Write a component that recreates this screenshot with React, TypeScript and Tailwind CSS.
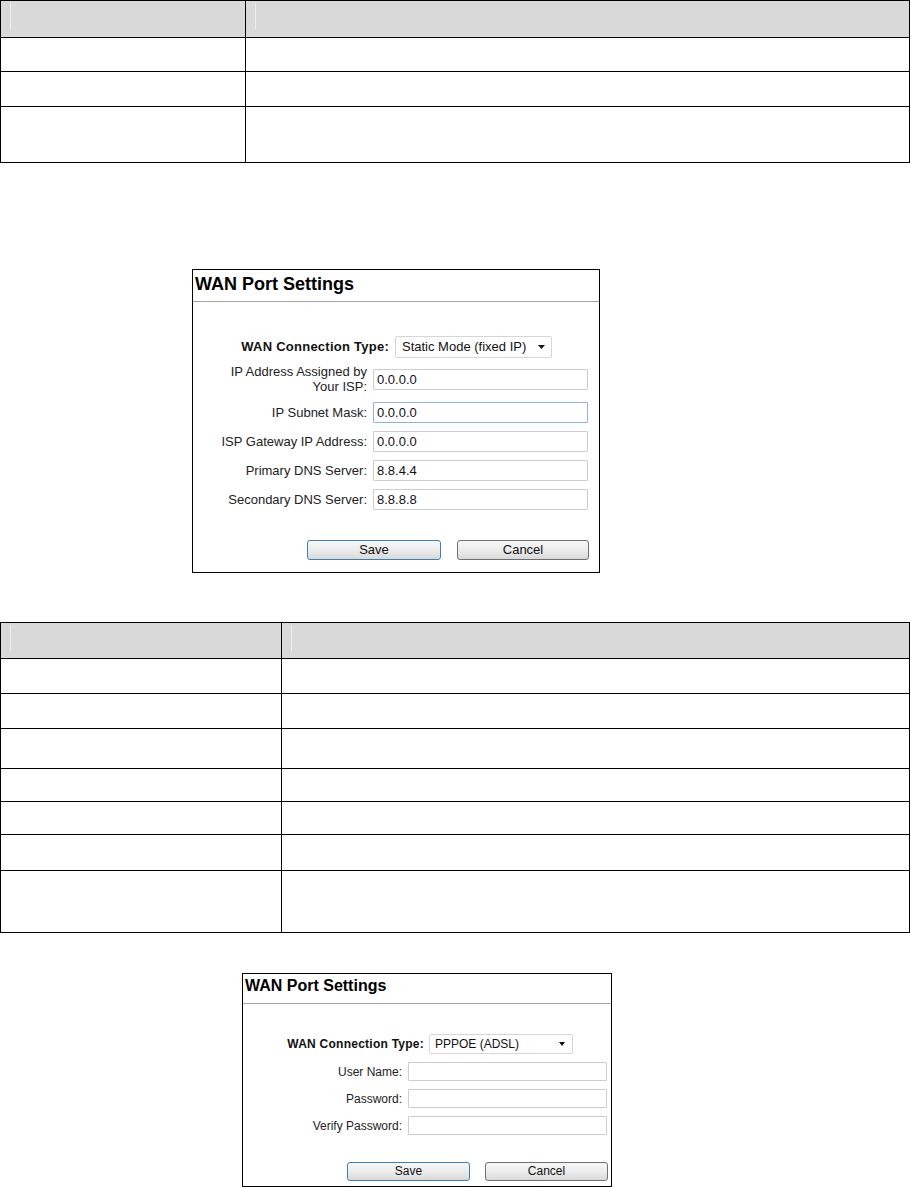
import React from 'react';

// Manual page: two blank parameter tables and two "WAN Port Settings" dialogs.

const FONT = "font-['Liberation_Sans',Arial,Helvetica,sans-serif]";

type TableProps = {
  leftWidth: string;
  header: string;
  rows: string[];
  lastRow: string;
};

function BlankTable({ leftWidth, header, rows, lastRow }: TableProps) {
  return (
    <div className="w-[910px] border border-black">
      <div className={`flex ${header} border-b border-black bg-[#d9d9d9]`}>
        <div className={`${leftWidth} shrink-0 border-r border-black`}>
          <div className="ml-[9px] mt-[2px] h-[26px] w-[1px] bg-[#eeeeee]" />
        </div>
        <div className="flex-1">
          <div className="ml-[9px] mt-[2px] h-[26px] w-[1px] bg-[#eeeeee]" />
        </div>
      </div>
      {rows.map((h, i) => (
        <div key={i} className={`flex ${h} border-b border-black`}>
          <div className={`${leftWidth} shrink-0 border-r border-black`} />
          <div className="flex-1" />
        </div>
      ))}
      <div className={`flex ${lastRow}`}>
        <div className={`${leftWidth} shrink-0 border-r border-black`} />
        <div className="flex-1" />
      </div>
    </div>
  );
}

function Caret({ w }: { w: number }) {
  return (
    <svg width={w} height="4" viewBox={`0 0 ${w} 4`} aria-hidden="true">
      <polygon points={`0,0 ${w},0 ${w / 2},4`} fill="#111" />
    </svg>
  );
}

function Field({
  value,
  focused,
  className,
}: {
  value: string;
  focused?: boolean;
  className: string;
}) {
  return (
    <input
      readOnly
      value={value}
      className={`${className} rounded-[1px] border bg-white pl-[3px] text-[#111] outline-none ${
        focused ? 'border-[#8fb4da]' : 'border-[#cdcdcd]'
      }`}
    />
  );
}

function Btn({ label, primary, className }: { label: string; primary?: boolean; className: string }) {
  return (
    <button
      type="button"
      className={`${className} rounded-[3px] border bg-gradient-to-b from-[#f7f7f7] via-[#ececec] to-[#d9d9d9] pb-[1px] leading-none text-[#111] ${
        primary ? 'border-[#3c7fb1]' : 'border-[#707070]'
      }`}
    >
      {label}
    </button>
  );
}

function StaticPanel() {
  const rows = [
    { label: 'IP Subnet Mask:', value: '0.0.0.0', focused: true },
    { label: 'ISP Gateway IP Address:', value: '0.0.0.0' },
    { label: 'Primary DNS Server:', value: '8.8.4.4' },
    { label: 'Secondary DNS Server:', value: '8.8.8.8' },
  ];
  return (
    <div className="ml-[192px] mt-[106px] h-[304px] w-[408px] border border-black bg-white text-[13px] text-[#222]">
      <div className="h-[32px] border-b border-[#a3a3a3] pl-[2px] pt-[4px]">
        <h2 className="text-[18px] font-bold leading-[20px] text-black">WAN Port Settings</h2>
      </div>

      <div className="mt-[34px] flex h-[22px] items-center">
        <div className="w-[196px] text-right font-bold tracking-[0.25px] text-[#111]">WAN Connection Type:</div>
        <div className="ml-[6px] flex h-[22px] w-[157px] items-center justify-between rounded-[2px] border border-[#d6d6d6] bg-white pl-[6px] pr-[6px] text-[#111]">
          <span>Static Mode (fixed IP)</span>
          <Caret w={7} />
        </div>
      </div>

      <div className="mt-[7px] flex items-center">
        <div className="w-[174px] text-right leading-[14.5px]">
          IP Address Assigned by
          <br />
          Your ISP:
        </div>
        <Field value="0.0.0.0" className="ml-[6px] h-[21px] w-[215px]" />
      </div>

      {rows.map((r) => (
        <div key={r.label} className="mt-[8px] flex h-[21px] items-center">
          <div className="w-[174px] text-right">{r.label}</div>
          <Field value={r.value} focused={r.focused} className="ml-[6px] h-[21px] w-[215px]" />
        </div>
      ))}

      <div className="mt-[30px] flex">
        <Btn label="Save" primary className="ml-[114px] h-[20px] w-[134px]" />
        <Btn label="Cancel" className="ml-[16px] h-[20px] w-[132px]" />
      </div>
    </div>
  );
}

function PppoePanel() {
  const rows = ['User Name:', 'Password:', 'Verify Password:'];
  return (
    <div className="ml-[242px] mt-[40px] h-[214px] w-[370px] border border-black bg-white text-[12px] text-[#222]">
      <div className="h-[30px] border-b border-[#a3a3a3] pl-[2px] pt-[3px]">
        <h2 className="text-[16px] font-bold leading-[18px] text-black">WAN Port Settings</h2>
      </div>

      <div className="mt-[30px] flex h-[20px] items-center">
        <div className="w-[181px] text-right font-bold tracking-[0.25px] text-[#111]">WAN Connection Type:</div>
        <div className="ml-[5px] flex h-[20px] w-[144px] items-center justify-between rounded-[2px] border border-[#d6d6d6] bg-white pl-[5px] pr-[7px] text-[#111]">
          <span>PPPOE (ADSL)</span>
          <Caret w={6} />
        </div>
      </div>

      {rows.map((label) => (
        <div key={label} className="mt-[8px] flex h-[19px] items-center">
          <div className="w-[159px] text-right">{label}</div>
          <Field value="" className="ml-[6px] h-[19px] w-[199px]" />
        </div>
      ))}

      <div className="mt-[27px] flex">
        <Btn label="Save" primary className="ml-[104px] h-[19px] w-[123px]" />
        <Btn label="Cancel" className="ml-[15px] h-[19px] w-[123px]" />
      </div>
    </div>
  );
}

export default function App() {
  return (
    <div className={`${FONT} min-h-[1187px] w-[911px] bg-white`}>
      <BlankTable
        leftWidth="w-[245px]"
        header="h-[37px]"
        rows={['h-[34px]', 'h-[35px]']}
        lastRow="h-[55px]"
      />

      <StaticPanel />

      <div className="mt-[49px]">
        <BlankTable
          leftWidth="w-[281px]"
          header="h-[36px]"
          rows={['h-[35px]', 'h-[35px]', 'h-[40px]', 'h-[33px]', 'h-[33px]', 'h-[36px]']}
          lastRow="h-[61px]"
        />
      </div>

      <PppoePanel />
    </div>
  );
}
